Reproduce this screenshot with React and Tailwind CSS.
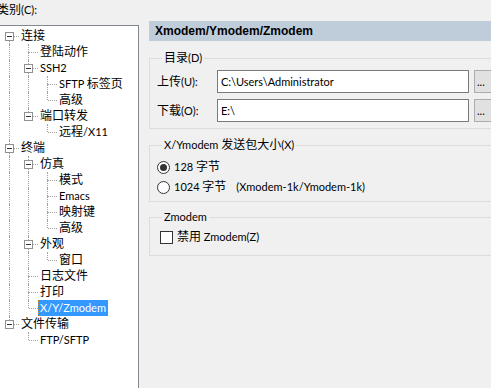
import React from "react";

const FONT = { fontFamily: 'Lato, "Noto Sans CJK SC", sans-serif' };
const HEAD_FONT = { fontFamily: '"Liberation Sans", Arial, sans-serif' };

function T({ s }) {
  const parts = s.split(/([\u3000-\u9fff\uff00-\uffef]+)/).filter((p) => p !== "");
  return (
    <>
      {parts.map((p, i) =>
        /[\u3000-\u9fff\uff00-\uffef]/.test(p) ? (
          <span key={i}>{p}</span>
        ) : (
          <span key={i} className="text-[11px]">
            {p}
          </span>
        )
      )}
    </>
  );
}

const tree = [
  {
    t: "连接",
    c: [
      { t: "登陆动作" },
      { t: "SSH2", c: [{ t: "SFTP 标签页" }, { t: "高级" }] },
      { t: "端口转发", c: [{ t: "远程/X11" }] },
    ],
  },
  {
    t: "终端",
    c: [
      { t: "仿真", c: [{ t: "模式" }, { t: "Emacs" }, { t: "映射键" }, { t: "高级" }] },
      { t: "外观", c: [{ t: "窗口" }] },
      { t: "日志文件" },
      { t: "打印" },
      { t: "X/Y/Zmodem", sel: true },
    ],
  },
  { t: "文件传输", c: [{ t: "FTP/SFTP" }] },
];

function flatten(nodes, anc = [], out = []) {
  nodes.forEach((n, i) => {
    const last = i === nodes.length - 1;
    out.push({ n, anc, last, first: anc.length === 0 && i === 0 });
    if (n.c) flatten(n.c, anc.concat(!last), out);
  });
  return out;
}

const rows = flatten(tree);
const DOT = "border-dotted border-[#a0a0a0]";

function TreeRow({ r }) {
  const { n, anc, last, first } = r;
  return (
    <div className="flex h-[16px]">
      {anc.map((cont, k) => (
        <div key={k} className="flex h-full w-[19px] shrink-0">
          {cont && <div className={`ml-[9px] h-full border-l ${DOT}`} />}
        </div>
      ))}
      <div className="relative h-full w-[19px] shrink-0">
        {!first && <div className={`absolute left-[9px] top-0 h-[8px] border-l ${DOT}`} />}
        {!last && <div className={`absolute left-[9px] top-[8px] h-[8px] border-l ${DOT}`} />}
        <div className={`absolute left-[10px] top-[8px] w-[9px] border-t ${DOT}`} />
        {n.c && (
          <div className="absolute left-[5px] top-[4px] flex h-[9px] w-[9px] items-center justify-center border border-[#919191] bg-white">
            <div className="h-px w-[5px] bg-[#333]" />
          </div>
        )}
      </div>
      <div
        className={
          n.sel
            ? "flex h-[16px] items-center whitespace-nowrap border border-dotted border-[#c07a20] bg-[#3399ff] px-[1px] text-white"
            : "flex h-[16px] items-center whitespace-nowrap border border-transparent px-[1px] text-black"
        }
      >
        <span>
          <T s={n.t} />
        </span>
      </div>
    </div>
  );
}

function Radio({ checked }) {
  return (
    <div className="flex h-[13px] w-[13px] shrink-0 items-center justify-center rounded-full border border-[#333] bg-white">
      {checked && <div className="h-[7px] w-[7px] rounded-full bg-[#333]" />}
    </div>
  );
}

function Btn() {
  return (
    <div className="ml-[5px] flex h-[23px] w-[25px] shrink-0 items-center border border-[#adadad] bg-[#e1e1e1] pl-[2px] text-[11px]">
      ...
    </div>
  );
}

export default function App() {
  return (
    <div
      className="flex h-[388px] w-[491px] overflow-hidden bg-[#f0f0f0] text-[12px] leading-[14px] text-black"
      style={FONT}
    >
      {/* left column */}
      <div className="flex w-[139px] shrink-0 flex-col">
        <div className="ml-[-3px] h-[25px] pt-[3px] whitespace-nowrap">
          <T s="类别(C):" />
        </div>
        <div className="flex-1 border-r border-t border-[#828790] bg-white pt-[2px]">
          {rows.map((r, i) => (
            <TreeRow key={i} r={r} />
          ))}
        </div>
      </div>

      {/* right side */}
      <div className="flex min-w-0 flex-1 flex-col pl-[10px]">
        <div
          className="mt-[21px] flex h-[20px] shrink-0 items-center bg-[#bfcddb] pl-[6px] text-[12px] font-bold whitespace-nowrap"
          style={HEAD_FONT}
        >
          Xmodem/Ymodem/Zmodem
        </div>

        <fieldset className="mr-[-20px] mt-[10px] border border-[#dcdcdc] pb-[6px] pl-[7px]">
          <legend className="ml-[5px] px-[2px] leading-[14px]">
            <T s="目录(D)" />
          </legend>
          <div className="mt-[5px] flex h-[23px] items-center">
            <div className="w-[60px] shrink-0 whitespace-nowrap">
              <T s="上传(U):" />
            </div>
            <div className="flex h-[23px] w-[252px] shrink-0 items-center border border-[#7a7a7a] bg-white pl-[3px] text-[11px] whitespace-nowrap">
              C:\Users\Administrator
            </div>
            <Btn />
          </div>
          <div className="mt-[6px] flex h-[23px] items-center">
            <div className="w-[60px] shrink-0 whitespace-nowrap">
              <T s="下载(O):" />
            </div>
            <div className="flex h-[23px] w-[252px] shrink-0 items-center border border-[#7a7a7a] bg-white pl-[3px] text-[11px]">
              E:\
            </div>
            <Btn />
          </div>
        </fieldset>

        <fieldset className="mr-[-20px] mt-[9px] border border-[#dcdcdc] pb-[4px] pl-[7px]">
          <legend className="ml-[5px] px-[2px] leading-[14px] whitespace-nowrap">
            <T s="X/Ymodem 发送包大小(X)" />
          </legend>
          <div className="mt-[5px] flex h-[20px] items-center gap-[4px]">
            <Radio checked />
            <span>
              <T s="128 字节" />
            </span>
          </div>
          <div className="flex h-[20px] items-center gap-[4px] whitespace-nowrap">
            <Radio />
            <span>
              <T s="1024 字节" />
            </span>
            <span className="ml-[6px] text-[11px]">(Xmodem-1k/Ymodem-1k)</span>
          </div>
        </fieldset>

        <fieldset className="mr-[-20px] mt-[8px] border border-[#dcdcdc] pb-[8px] pl-[10px]">
          <legend className="ml-[2px] px-[2px] leading-[14px] text-[11px]">Zmodem</legend>
          <div className="mt-[3px] flex h-[20px] items-center gap-[4px] whitespace-nowrap">
            <div className="h-[13px] w-[13px] shrink-0 border border-[#333] bg-white" />
            <span>
              <T s="禁用 Zmodem(Z)" />
            </span>
          </div>
        </fieldset>
      </div>
    </div>
  );
}
